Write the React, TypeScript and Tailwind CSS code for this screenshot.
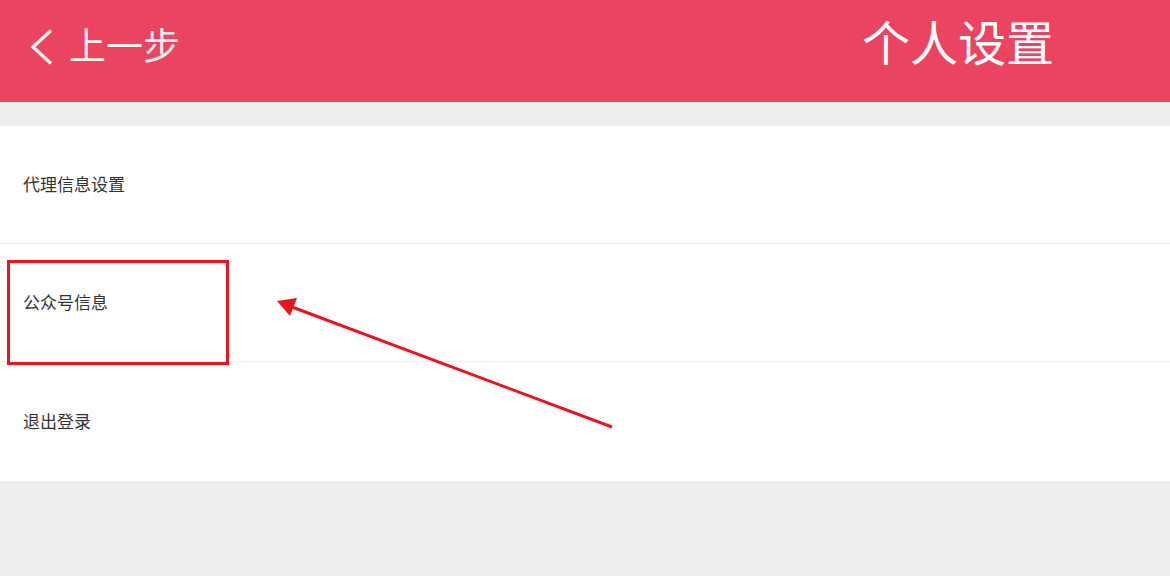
import React from 'react';

const items = ['代理信息设置', '公众号信息', '退出登录'];

export default function App() {
  return (
    <div
      className="relative w-[1170px] h-[576px] bg-[#eeeeee] overflow-hidden"
      style={{ fontFamily: '"Liberation Sans", "Noto Sans CJK SC", sans-serif' }}
    >
      {/* Header */}
      <div className="h-[102px] bg-[#eb4460] flex items-center">
        <div className="flex items-center pl-[28px] w-[838px] text-[#f2eeee]">
          <svg width="26" height="36" viewBox="0 0 26 36" className="mt-[-8px]">
            <path d="M23 1.5 L5 18 L23 34.5" fill="none" stroke="currentColor" strokeWidth="3.4" />
          </svg>
          <span className="ml-[15px] text-[37px] leading-none mt-[-8px]">上一步</span>
        </div>
        <div className="pl-[24px] text-white text-[48px] leading-none mt-[-12px]">个人设置</div>
      </div>

      {/* List */}
      <div className="mt-[24px] bg-white">
        {items.map((label, i) => (
          <div
            key={label}
            className={
              'flex items-center pl-[23px] text-[17px] text-[#333333] ' +
              (i < items.length - 1 ? 'h-[118px] border-b border-[#eeeeee]' : 'h-[119px]')
            }
          >
            <span className="mt-[2px]">{label}</span>
          </div>
        ))}
      </div>

      {/* Annotation overlay */}
      <div className="absolute left-[7px] top-[260px] w-[222px] h-[105px] border-[3px] border-[#e8141e]" />
      <svg className="absolute left-0 top-0" width="1170" height="576" viewBox="0 0 1170 576">
        <line x1="612" y1="427" x2="292" y2="307" stroke="#e8141e" strokeWidth="3" />
        <polygon points="277,301 297,298 290,316" fill="#e8141e" />
      </svg>
    </div>
  );
}
